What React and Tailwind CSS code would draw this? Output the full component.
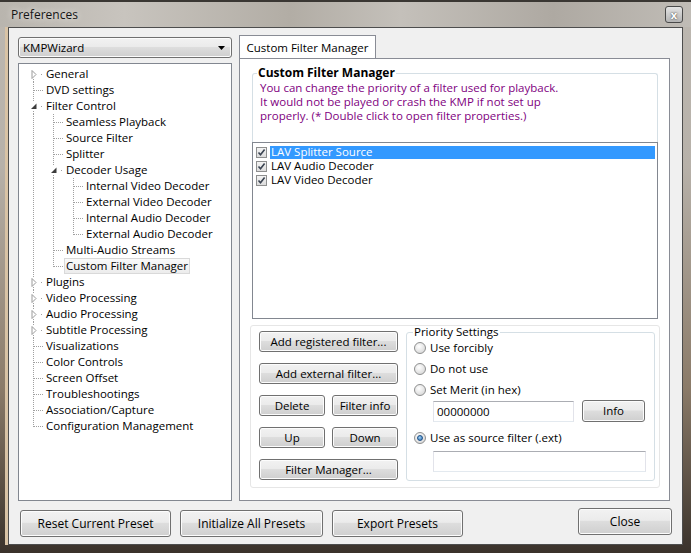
import React from 'react'

const tree = [
  { label: 'General', cols: ['closedFirst'] },
  { label: 'DVD settings', cols: ['tee'] },
  { label: 'Filter Control', cols: ['open'] },
  { label: 'Seamless Playback', cols: ['pass', 'tee'] },
  { label: 'Source Filter', cols: ['pass', 'tee'] },
  { label: 'Splitter', cols: ['pass', 'tee'] },
  { label: 'Decoder Usage', cols: ['pass', 'open'] },
  { label: 'Internal Video Decoder', cols: ['pass', 'pass', 'tee'] },
  { label: 'External Video Decoder', cols: ['pass', 'pass', 'tee'] },
  { label: 'Internal Audio Decoder', cols: ['pass', 'pass', 'tee'] },
  { label: 'External Audio Decoder', cols: ['pass', 'pass', 'ell'] },
  { label: 'Multi-Audio Streams', cols: ['pass', 'tee'] },
  { label: 'Custom Filter Manager', cols: ['pass', 'ell'], selected: true },
  { label: 'Plugins', cols: ['closed'] },
  { label: 'Video Processing', cols: ['closed'] },
  { label: 'Audio Processing', cols: ['closed'] },
  { label: 'Subtitle Processing', cols: ['closed'] },
  { label: 'Visualizations', cols: ['tee'] },
  { label: 'Color Controls', cols: ['tee'] },
  { label: 'Screen Offset', cols: ['tee'] },
  { label: 'Troubleshootings', cols: ['tee'] },
  { label: 'Association/Capture', cols: ['tee'] },
  { label: 'Configuration Management', cols: ['ell'] },
]

const filters = ['LAV Splitter Source', 'LAV Audio Decoder', 'LAV Video Decoder']

function Guide({ type }) {
  const dot = { stroke: '#a0a0a0', strokeDasharray: '1 1' }
  return (
    <svg width="20" height="16" className="block shrink-0" shapeRendering="crispEdges">
      {(type === 'pass' || type === 'tee') && <line x1="9.5" y1="0" x2="9.5" y2="16" {...dot} />}
      {type === 'ell' && <line x1="9.5" y1="0" x2="9.5" y2="9" {...dot} />}
      {(type === 'tee' || type === 'ell') && <line x1="10" y1="8.5" x2="19" y2="8.5" {...dot} />}
      {(type === 'closed' || type === 'open') && <line x1="9.5" y1="0" x2="9.5" y2="4" {...dot} />}
      {(type === 'closed' || type === 'open' || type === 'closedFirst') && (
        <>
          <line x1="9.5" y1="13" x2="9.5" y2="16" {...dot} />
          <rect x="17" y="8" width="1" height="1" fill="#a0a0a0" />
        </>
      )}
      {(type === 'closed' || type === 'closedFirst') && (
        <polygon points="8,4.5 12,8.5 8,12.5" fill="#fff" stroke="#9a9a9a" shapeRendering="auto" />
      )}
      {type === 'open' && <polygon points="12.5,5.5 12.5,11 7,11" fill="#3c3c3c" shapeRendering="auto" />}
    </svg>
  )
}

function Btn({ className = '', children }) {
  return (
    <button
      type="button"
      className={`flex items-center justify-center rounded-[3px] border border-[#707070] bg-[linear-gradient(180deg,#f2f2f2_0%,#ebebeb_45%,#dddddd_50%,#cfcfcf_100%)] shadow-[inset_0_0_0_1px_#fcfcfc] text-black ${className}`}
    >
      {children}
    </button>
  )
}

function Radio({ checked }) {
  return (
    <span className="flex h-[12px] w-[12px] shrink-0 items-center justify-center rounded-full border border-[#8e8f8f] bg-[radial-gradient(circle_at_40%_35%,#ffffff,#cfcfcf)]">
      {checked && (
        <span className="h-[6px] w-[6px] rounded-full border border-[#1d4f86] bg-[radial-gradient(circle_at_40%_35%,#9fd0f2,#2a6db3)]" />
      )}
    </span>
  )
}

function Check() {
  return (
    <span className="flex h-[11px] w-[11px] shrink-0 items-center justify-center border border-[#8e8f8f] bg-[linear-gradient(180deg,#f4f4f4,#dcdcdc)]">
      <svg width="9" height="9" viewBox="0 0 9 9">
        <path d="M1.5 4.5 L3.5 6.8 L7.6 1.5" fill="none" stroke="#3b4452" strokeWidth="1.6" />
      </svg>
    </span>
  )
}

export default function App() {
  return (
    <div className="flex h-[553px] w-[691px] flex-col overflow-hidden bg-[linear-gradient(180deg,#bdb8b1_0%,#b7b1a9_30%,#8b7b69_70%,#3a322b_100%)] font-['Open_Sans',sans-serif] text-[11.5px] leading-[16px] text-black">
      {/* title bar */}
      <div className="flex h-[27px] shrink-0 items-center justify-between border-t-[2px] border-[#3a3733] bg-[linear-gradient(90deg,#b9b5ae_0%,#c8c4be_18%,#b2ada5_42%,#c4c0ba_58%,#aea9a2_80%,#c0bcb6_100%)] pl-[11px] pr-[8px]">
        <span className="text-[12px] text-[#151515] [text-shadow:0_0_6px_#f2f0ec]">Preferences</span>
        <span className="flex h-[17px] w-[18px] items-center justify-center rounded-[3px] border border-[#4a4a4a] bg-[linear-gradient(180deg,#e4e4e4,#b4b4b4)] text-[11px] font-bold leading-none text-white [text-shadow:0_0_2px_#222]">
          x
        </span>
      </div>

      {/* client area */}
      <div className="mx-[8px] mb-[8px] flex flex-1 flex-col border border-[#4d4d4d] bg-[#f0f0f0] shadow-[-3px_0_0_#d9c3a5]">
        <div className="flex gap-[7px] pl-[9px] pt-[7px]">
          {/* left column */}
          <div className="mt-[2px] flex w-[214px] flex-col gap-[5px]">
            <div className="flex h-[21px] items-center justify-between rounded-[3px] border border-[#707070] bg-[linear-gradient(180deg,#f2f2f2_0%,#ebebeb_45%,#dddddd_50%,#cfcfcf_100%)] pl-[4px] pr-[6px] shadow-[inset_0_0_0_1px_#fcfcfc]">
              <span>KMPWizard</span>
              <svg width="7" height="4" viewBox="0 0 7 4">
                <polygon points="0,0 7,0 3.5,4" fill="#000" />
              </svg>
            </div>
            <div className="h-[438px] border border-[#828790] bg-white pl-[5px] pt-[2px]">
              {tree.map((row) => (
                <div key={row.label} className="flex h-[16px] items-center">
                  {row.cols.map((c, i) => (
                    <Guide key={i} type={c} />
                  ))}
                  <span
                    className={`border px-[1px] leading-[14px] whitespace-nowrap ${
                      row.selected
                        ? 'border-[#d9d9d9] bg-[linear-gradient(180deg,#fafafa,#ececec)]'
                        : 'border-transparent'
                    }`}
                  >
                    {row.label}
                  </span>
                </div>
              ))}
            </div>
          </div>

          {/* right column */}
          <div className="flex w-[431px] flex-col">
            <div className="flex h-[23px]">
              <div className="-mb-px flex h-[24px] w-[137px] items-center justify-center border border-b-0 border-[#898c95] bg-white">
                Custom Filter Manager
              </div>
            </div>
            <div className="flex h-[443px] flex-col border border-[#898c95] bg-white pt-[6px]">
              <fieldset className="ml-[12px] mr-[11px] rounded-t-[3px] border border-b-0 border-[#d5dfe5]">
                <legend className="ml-[4px] px-[1px] text-[12px] font-bold leading-[16px]">Custom Filter Manager</legend>
                <div className="pb-[19px] pl-[7px] leading-[14px] text-[#800080]">
                  <div>You can change the priority of a filter used for playback.</div>
                  <div>It would not be played or crash the KMP if not set up</div>
                  <div>properly. (* Double click to open filter properties.)</div>
                </div>
                <div className="-mx-px h-[177px] border border-[#828790] bg-white pl-[3px] pr-[2px] pt-[2px]">
                  {filters.map((f, i) => (
                    <div key={f} className="flex h-[14px] items-center gap-[3px]">
                      <Check />
                      <span
                        className={`flex h-[13px] flex-1 items-center pl-[1px] ${
                          i === 0 ? 'bg-[#3399ff] text-white' : ''
                        }`}
                      >
                        {f}
                      </span>
                    </div>
                  ))}
                </div>
              </fieldset>

              <div className="ml-[10px] mr-[9px] mt-[6px] flex h-[163px] gap-[8px] rounded-[3px] border border-[#e6e6e6] pl-[8px] pt-[5px]">
                <div className="flex w-[139px] flex-col gap-[11px]">
                  <Btn className="h-[21px]">Add registered filter...</Btn>
                  <Btn className="h-[21px]">Add external filter...</Btn>
                  <div className="flex gap-[7px]">
                    <Btn className="h-[21px] flex-1">Delete</Btn>
                    <Btn className="h-[21px] flex-1">Filter info</Btn>
                  </div>
                  <div className="flex gap-[7px]">
                    <Btn className="h-[21px] flex-1">Up</Btn>
                    <Btn className="h-[21px] flex-1">Down</Btn>
                  </div>
                  <Btn className="h-[21px]">Filter Manager...</Btn>
                </div>

                <fieldset className="-mt-[7px] h-[157px] w-[249px] rounded-[3px] border border-[#d5dfe5] pl-[7px]">
                  <legend className="-ml-[1px] px-[1px] leading-[16px]">Priority Settings</legend>
                  <div className="flex h-[16px] items-center gap-[4px]">
                    <Radio />
                    <span>Use forcibly</span>
                  </div>
                  <div className="mt-[5px] flex h-[16px] items-center gap-[4px]">
                    <Radio />
                    <span>Do not use</span>
                  </div>
                  <div className="mt-[5px] flex h-[16px] items-center gap-[4px]">
                    <Radio />
                    <span>Set Merit (in hex)</span>
                  </div>
                  <div className="mt-[2px] flex h-[22px] items-start gap-[8px] pl-[19px]">
                    <div className="mt-[1px] flex h-[21px] w-[141px] items-center border border-[#abadb3] border-x-[#e2e3ea] border-b-[#e3e9ef] bg-white pl-[3px]">
                      00000000
                    </div>
                    <Btn className="h-[22px] w-[63px]">Info</Btn>
                  </div>
                  <div className="mt-[8px] flex h-[16px] items-center gap-[4px]">
                    <Radio checked />
                    <span>Use as source filter (.ext)</span>
                  </div>
                  <div className="ml-[19px] mt-[5px] h-[21px] w-[213px] border border-[#abadb3] border-x-[#e2e3ea] border-b-[#e3e9ef] bg-white" />
                </fieldset>
              </div>
            </div>
          </div>
        </div>

        {/* bottom buttons */}
        <div className="mt-[7px] flex items-start justify-between pl-[11px] pr-[10px] text-[12px]">
          <div className="mt-[2px] flex gap-[9px]">
            <Btn className="h-[27px] w-[151px]">Reset Current Preset</Btn>
            <Btn className="h-[27px] w-[143px]">Initialize All Presets</Btn>
            <Btn className="h-[27px] w-[131px]">Export Presets</Btn>
          </div>
          <Btn className="h-[27px] w-[94px]">Close</Btn>
        </div>
      </div>
    </div>
  )
}
